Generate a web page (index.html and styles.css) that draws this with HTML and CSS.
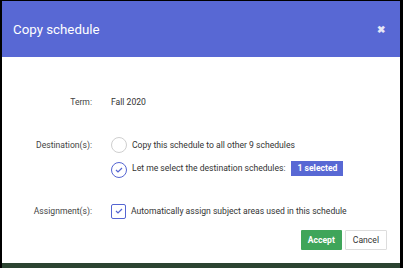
FILE: index.html
```html
<!DOCTYPE html>
<html lang="en">
<head>
  <meta charset="UTF-8">
  <title>Copy schedule</title>
  <link rel="stylesheet" href="styles.css">
</head>
<body>

<div class="dialogo">
  <div class="cabecera">
    <h2>Copy schedule</h2>
    <span class="cerrar">&#10006;</span>
  </div>

  <div class="cuerpo">
    <div class="fila">
      <span class="etiqueta">Term:</span>
      <span class="valor">Fall 2020</span>
    </div>

    <div class="fila">
      <span class="etiqueta">Destination(s):</span>
      <div class="opciones">
        <label class="opcion">
          <span class="radio"></span>
          Copy this schedule to all other 9 schedules
        </label>
        <label class="opcion">
          <span class="radio marcado">
            <svg width="8" height="6" viewBox="0 0 8 6"><path d="M1 3 L3 5 L7 1" fill="none" stroke="#5565d2" stroke-width="1.2"/></svg>
          </span>
          Let me select the destination schedules:
          <span class="insignia">1 selected</span>
        </label>
      </div>
    </div>

    <div class="fila">
      <span class="etiqueta">Assignment(s):</span>
      <label class="opcion">
        <span class="casilla">
          <svg width="8" height="6" viewBox="0 0 8 6"><path d="M1 3 L3 5 L7 1" fill="none" stroke="#5565d2" stroke-width="1.2"/></svg>
        </span>
        Automatically assign subject areas used in this schedule
      </label>
    </div>

    <div class="botones">
      <button class="aceptar">Accept</button>
      <button class="cancelar">Cancel</button>
    </div>
  </div>
</div>
<div class="franja"></div>

</body>
</html>
```

FILE: styles.css
```css
body {
  font-family: Roboto, "Liberation Sans", sans-serif;
  background-color: #000;
  margin: 0;
  padding: 1px 3px 0 2px;
}

.dialogo {
  background-color: #ffffff;
}

.cabecera {
  height: 56px;
  background-color: #5868d4;
  display: flex;
  align-items: center;
  justify-content: space-between;
  padding: 0 15px 0 11px;
}

.cabecera h2 {
  margin: 0;
  font-size: 13.3px;
  font-weight: normal;
  color: #ffffff;
}

.cerrar {
  color: #e6e8f7;
  font-size: 10px;
  font-weight: bold;
}

.cuerpo {
  padding: 37px 13px 13px 0;
  display: flex;
  flex-direction: column;
  gap: 27px;
  font-size: 8.6px;
  color: #333;
}

.fila {
  display: grid;
  grid-template-columns: 90px 1fr;
  column-gap: 19px;
  align-items: start;
}

.etiqueta {
  text-align: right;
  color: #444;
  line-height: 16px;
}

.valor {
  line-height: 16px;
}

.opciones {
  display: flex;
  flex-direction: column;
  gap: 7px;
}

.opcion {
  display: flex;
  align-items: center;
  gap: 5px;
  height: 16px;
}

.radio {
  width: 14px;
  height: 14px;
  border: 1px solid #cfcfcf;
  border-radius: 50%;
  display: flex;
  align-items: center;
  justify-content: center;
}

.radio.marcado {
  border-color: #5565d2;
  margin-top: 3px;
}

.casilla {
  width: 13px;
  height: 13px;
  border: 1px solid #5565d2;
  border-radius: 2px;
  display: flex;
  align-items: center;
  justify-content: center;
}

.insignia {
  background-color: #5868d4;
  color: #fff;
  font-weight: bold;
  padding: 0 6px;
  line-height: 15px;
  margin-left: 1px;
}

.botones {
  display: flex;
  justify-content: flex-end;
  gap: 3px;
  margin-top: -16px;
}

button {
  font-family: Roboto, "Liberation Sans", sans-serif;
  font-size: 8.6px;
  height: 20px;
  padding: 0 7px;
  border-radius: 1px;
  cursor: pointer;
}

.aceptar {
  background-color: #3fa55a;
  color: #fff;
  border: none;
  font-weight: bold;
}

.cancelar {
  background-color: #fff;
  color: #333;
  border: 1px solid #ddd;
}

.franja {
  height: 5px;
  background-color: #2c4431;
}
```
